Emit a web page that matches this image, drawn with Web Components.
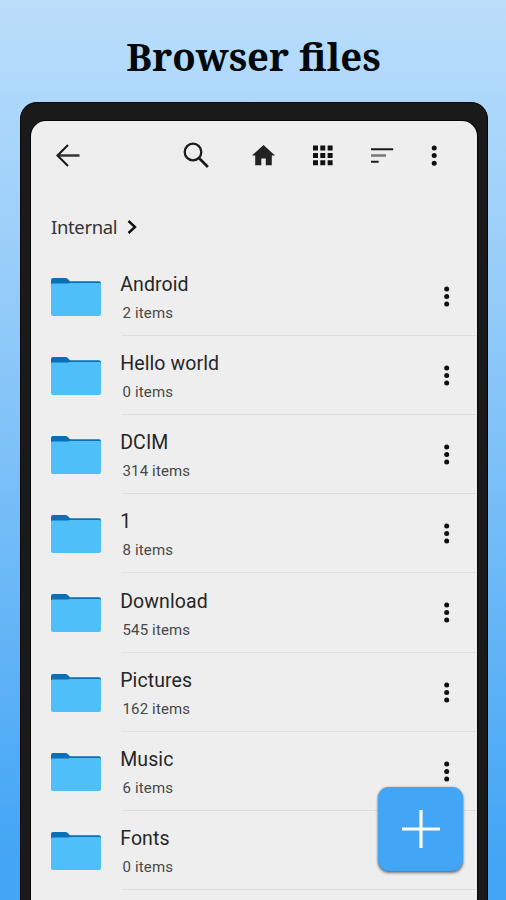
<!DOCTYPE html>
<html lang="en">
<head>
<meta charset="utf-8">
<title>Browser files</title>
<style>
html,body{margin:0;height:900px;overflow:hidden}
</style>
</head>
<body>
<promo-page>
  <span slot="title">Browser files</span>
  <phone-frame>
    <tool-bar></tool-bar>
    <path-crumb>Internal</path-crumb>
    <file-row name="Android" items="2 items"></file-row>
    <file-row name="Hello world" items="0 items"></file-row>
    <file-row name="DCIM" items="314 items"></file-row>
    <file-row name="1" items="8 items"></file-row>
    <file-row name="Download" items="545 items"></file-row>
    <file-row name="Pictures" items="162 items"></file-row>
    <file-row name="Music" items="6 items"></file-row>
    <file-row name="Fonts" items="0 items"></file-row>
    <add-button slot="fab"></add-button>
  </phone-frame>
</promo-page>
<script>
const define = (tag, html) => customElements.define(tag, class extends HTMLElement {
  constructor() {
    super();
    this.attachShadow({mode: 'open'}).innerHTML = html(this);
  }
});

define('promo-page', () => `<style>
:host{display:flex;flex-direction:column;width:506px;height:900px;overflow:hidden;background:linear-gradient(#bbdefb 0,#90caf9 36%,#42a5f5 96%)}
h1{margin:0;height:102px;flex:none;box-sizing:border-box;padding:32px 0 0 1px;text-align:center;font:bold 38.400px/48px "Noto Serif","DejaVu Serif Condensed","DejaVu Serif",serif;color:#03080d}
h1 ::slotted(span){display:inline-block}
</style><h1><slot name="title"></slot></h1><slot></slot>`);

define('phone-frame', () => `<style>
:host{display:block;position:relative;box-sizing:border-box;flex:1;margin:0 18.500px 0 20px;background:#1a1a1a;border:solid #050505;border-width:1px 1px 0;border-radius:17px 17px 0 0;padding:17.5px 9.5px 0 10px;min-height:0}
.screen{height:100%;background:#eee;border-radius:15px 15px 0 0;overflow:hidden;box-shadow:0 0 0 1px #050505}
.fab{position:absolute;right:24px;top:684px}
</style><div class="screen"><slot></slot></div><div class="fab"><slot name="fab"></slot></div>`);

define('tool-bar', () => `<style>
:host{display:block;height:69px}
svg{display:block}
</style><svg width="446" height="69" fill="none" stroke="#1b1b1b" stroke-width="2.1">
<path d="M48.500 34.500H27" stroke="#333" stroke-width="2.400"/><path d="M37 24L26.500 34.500L37 45"/>
<circle cx="162" cy="31" r="8.300" stroke-width="2.3"/><path d="M168.200 37.300L176.900 46" stroke-width="2.7"/>
<path stroke="none" fill="#222" d="M232.500 24L221 34.500H224.200V44.200H230.300V37.500H234.800V44.200H240.800V34.500H244Z"/>
<g stroke="none" fill="#111"><path d="M282 24.500h5v5h-5zM289.300 24.500h5v5h-5zM296.600 24.500h5v5h-5zM282 31.900h5v5h-5zM289.300 31.900h5v5h-5zM296.600 31.900h5v5h-5zM282 39.300h5v5h-5zM289.300 39.300h5v5h-5zM296.600 39.300h5v5h-5z"/>
<circle cx="403.200" cy="27" r="2.500"/><circle cx="403.200" cy="34.600" r="2.500"/><circle cx="403.200" cy="42.200" r="2.500"/></g>
<path d="M340 28.300H362.200"/><path d="M340 34.500H355" stroke="#777" stroke-width="2.6"/><path d="M340 40.700H347.600"/>
</svg>`);

define('path-crumb', () => `<style>
:host{display:flex;align-items:center;box-sizing:border-box;height:67px;padding:8px 0 0 20px;font:18.500px/26px "Noto Sans",sans-serif;letter-spacing:-.350px;color:#333}
svg{margin-left:10px}
</style><span><slot></slot></span><svg width="10" height="16" fill="none" stroke="#111" stroke-width="2.4"><path d="M1.500 2L8 8L1.500 14"/></svg>`);

define('file-row', e => `<style>
:host{display:grid;grid-template-columns:50px 1fr 18px;column-gap:20px;height:79.230px;padding:0 21px 0 19.500px}
.folder{margin-top:20px}
.text{border-bottom:1.500px solid #dedede;margin:0 -59px 0 1px;padding-top:16.300px;height:62px}
.name{font:19.500px/24px Roboto,sans-serif;color:#262626;letter-spacing:.1px;margin-left:-1.300px}
.sub{font:15px/20px Roboto,sans-serif;color:#484848;margin:6px 0 0 1px;letter-spacing:.15px}
.dots{margin:28px 0 0 5px}
</style><svg class="folder" width="50" height="40"><path fill="#0b6fb5" d="M0 3Q0 1 2 1H14.500Q16 1 17 2.300L19 4.200H48Q50 4.200 50 6.200V12H0Z"/><path fill="#4fbffa" d="M0 8Q0 6.600 1.500 6.600H16.500L19 6.100H48.500Q50 6.100 50 7.500V37Q50 39 48 39H2Q0 39 0 37Z"/></svg>
<div class="text"><div class="name">${e.getAttribute('name')}</div><div class="sub">${e.getAttribute('items')}</div></div>
<svg class="dots" width="8" height="24" fill="#111"><circle cx="3.700" cy="4" r="2.500"/><circle cx="3.700" cy="11.500" r="2.500"/><circle cx="3.700" cy="19" r="2.500"/></svg>`);

define('add-button', () => `<style>
:host{display:grid;place-items:center;width:85px;height:84px;border-radius:11px;background:#42a5f5;box-shadow:0 2px 3px rgba(0,0,0,.5),0 0 2px rgba(0,0,0,.3)}
svg{margin-left:2px}
</style><svg width="38" height="38" stroke="#fff" stroke-width="3.200"><path d="M0 19H38M19 0V38"/></svg>`);
</script>
</body>
</html>
